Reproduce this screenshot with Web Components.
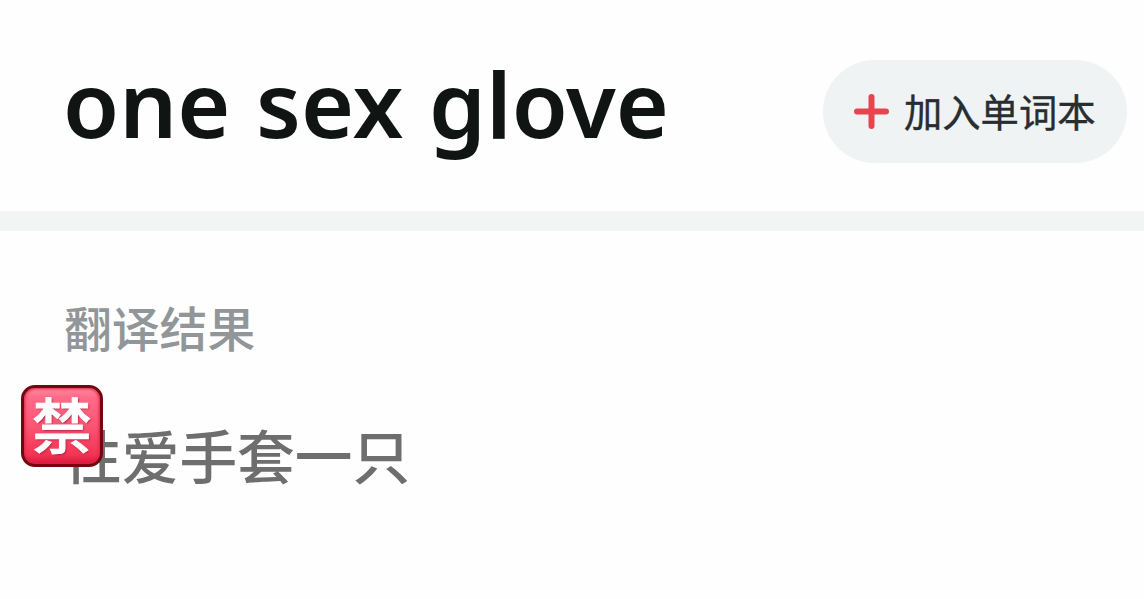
<!DOCTYPE html>
<html lang="zh-CN">
<head>
<meta charset="utf-8">
<title>one sex glove</title>
<style>
  html, body {
    margin: 0;
    height: 100%;
    overflow: hidden;
    background: #fefefe;
    --cjk: "Noto Sans CJK SC", sans-serif;
  }
</style>
</head>
<body>
<word-page>
  <word-header slot="header">
    one sex glove
    <add-button slot="action">加入单词本</add-button>
  </word-header>
  <word-result heading="翻译结果">性爱手套一只</word-result>
</word-page>

<script>
class WordPage extends HTMLElement {
    constructor() {
        super();
        this._root = this.attachShadow({ mode: 'open' });
        this._root.innerHTML = `
            <style>
            :host {
              display: flex;
              flex-direction: column;
              height: 599px;
            }
            .divider {
              flex: none;
              height: 20px;
              background: #f1f5f4;
            }
            </style>
            <slot name="header"></slot>
            <div class="divider"></div>
            <slot></slot>
        `;
    }
}

class WordHeader extends HTMLElement {
    constructor() {
        super();
        this._root = this.attachShadow({ mode: 'open' });
        this._root.innerHTML = `
            <style>
            :host {
              display: flex;
              justify-content: space-between;
              align-items: flex-start;
              box-sizing: border-box;
              flex: none;
              height: 211px;
              padding: 60px 17px 0 63px;
            }
            h1 {
              margin: -7px 0 0;
              font: 600 91px/100px "Noto Sans", sans-serif;
              word-spacing: 2px;
              color: #101413;
              white-space: nowrap;
            }
            </style>
            <h1><slot></slot></h1>
            <slot name="action"></slot>
        `;
    }
}

class AddButton extends HTMLElement {
    constructor() {
        super();
        this._root = this.attachShadow({ mode: 'open' });
        this._root.innerHTML = `
            <style>
            :host {
              display: flex;
              align-items: center;
              box-sizing: border-box;
              flex: none;
              width: 304px;
              height: 103px;
              padding-left: 31px;
              gap: 15px;
              border-radius: 52px;
              background: #f0f3f3;
              font: 400 38.3px/50px var(--cjk);
              word-spacing: 0;
              color: #282d31;
              white-space: nowrap;
            }
            svg {
              flex: none;
            }
            span {
              margin-top: -1px;
              -webkit-text-stroke: .4px;
            }
            </style>
            <svg width="35" height="35" viewBox="0 0 35 35">
              <path d="M17.5 3v29M3 17.5h29" stroke="#e8434f" stroke-width="6" stroke-linecap="round"/>
            </svg>
            <span><slot></slot></span>
        `;
    }
}

class BanBadge extends HTMLElement {
    constructor() {
        super();
        this._root = this.attachShadow({ mode: 'open' });
        this._root.innerHTML = `
            <style>
            :host {
              display: grid;
              place-items: center;
              box-sizing: border-box;
              width: 82px;
              height: 82px;
              border: 3px solid #74060f;
              border-radius: 14px;
              background: linear-gradient(#ff8ba2 0, #ff6b88 12%, #fb5574 50%, #f23453 88%, #d9183c 100%);
              box-shadow: inset 0 0 3px 1px #d92349;
              font: 500 60px/76px var(--cjk);
              color: #fff;
              text-shadow: 1px 1px 2px #a91e3b;
            }
            span {
              margin-top: -6px;
              -webkit-text-stroke: .8px;
            }
            </style>
            <span>禁</span>
        `;
    }
}

class WordResult extends HTMLElement {
    constructor() {
        super();
        this._root = this.attachShadow({ mode: 'open' });
        this._root.innerHTML = `
            <style>
            :host {
              display: block;
              padding: 66px 0 0 64px;
              font-family: var(--cjk);
            }
            h2 {
              margin: 0;
              font-size: 47.8px;
              font-weight: 500;
              line-height: 60px;
              color: #919699;
            }
            .result {
              position: relative;
              margin: 62px 0 0;
              font-size: 57.7px;
              font-weight: 500;
              line-height: 70px;
              color: #6e6e6e;
            }
            /* the badge sits over the first character */
            ban-badge {
              position: absolute;
              left: -43px;
              top: -34px;
            }
            </style>
            <h2></h2>
            <p class="result"><slot></slot><ban-badge></ban-badge></p>
        `;
        this._root.querySelector('h2').textContent = this.getAttribute('heading');
    }
}

window.customElements.define('word-page', WordPage);
window.customElements.define('word-header', WordHeader);
window.customElements.define('add-button', AddButton);
window.customElements.define('ban-badge', BanBadge);
window.customElements.define('word-result', WordResult);
</script>
</body>
</html>
